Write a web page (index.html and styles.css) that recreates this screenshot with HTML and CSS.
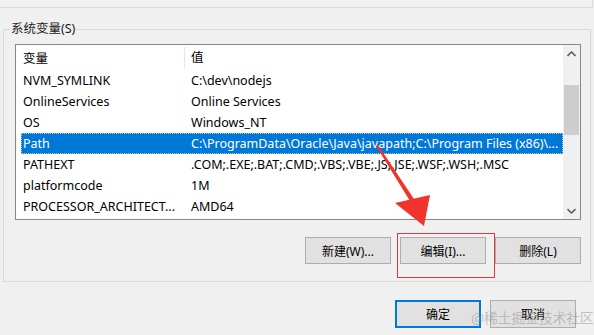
FILE: index.html
```html
<!DOCTYPE html>
<html lang="zh-CN">
<head>
    <meta charset="UTF-8">
    <meta name="viewport" content="width=device-width, initial-scale=1.0">
    <title>环境变量</title>
    <link rel="stylesheet" href="styles.css">
</head>
<body>

    <!-- bottom edge of the user variables group -->
    <div class="prev-group"></div>

    <fieldset class="group">
        <legend>系统变量(S)</legend>

        <div class="list">
            <div class="list-body">
                <div class="row head">
                    <span class="c1">变量</span>
                    <span class="c2">值</span>
                </div>
                <div class="row"><span class="c1">NVM_SYMLINK</span><span class="c2">C:\dev\nodejs</span></div>
                <div class="row"><span class="c1">OnlineServices</span><span class="c2">Online Services</span></div>
                <div class="row"><span class="c1">OS</span><span class="c2">Windows_NT</span></div>
                <div class="row selected"><span class="c1">Path</span><span class="c2">C:\ProgramData\Oracle\Java\javapath;C:\Program Files (x86)\...</span></div>
                <div class="row"><span class="c1">PATHEXT</span><span class="c2">.COM;.EXE;.BAT;.CMD;.VBS;.VBE;.JS;.JSE;.WSF;.WSH;.MSC</span></div>
                <div class="row"><span class="c1">platformcode</span><span class="c2">1M</span></div>
                <div class="row"><span class="c1">PROCESSOR_ARCHITECT...</span><span class="c2">AMD64</span></div>
            </div>
            <div class="scrollbar">
                <div class="sb-btn">
                    <svg width="9" height="6" viewBox="0 0 9 6"><path d="M0.5 5 L4.5 1 L8.5 5" fill="none" stroke="#606060" stroke-width="1.6"/></svg>
                </div>
                <div class="sb-track">
                    <div class="sb-thumb"></div>
                </div>
                <div class="sb-btn">
                    <svg width="9" height="6" viewBox="0 0 9 6"><path d="M0.5 1 L4.5 5 L8.5 1" fill="none" stroke="#606060" stroke-width="1.6"/></svg>
                </div>
            </div>
        </div>

        <div class="group-buttons">
            <button class="btn">新建(W)...</button>
            <button class="btn">编辑(I)...</button>
            <button class="btn">删除(L)</button>
        </div>
    </fieldset>

    <div class="dialog-buttons">
        <button class="btn default">确定</button>
        <button class="btn">取消</button>
    </div>

    <!-- annotation: red box and arrow pointing at the edit button -->
    <div class="mark-box"></div>
    <svg class="mark-arrow" width="594" height="335" viewBox="0 0 594 335">
        <polygon points="376,146 378,145 414,199 410,201" fill="#f0342c"/>
        <polygon points="395,203 430,195 424,226" fill="#f0342c"/>
    </svg>

    <div class="watermark">@稀土掘金技术社区</div>

</body>
</html>
```

FILE: styles.css
```css
* {
    margin: 0;
    padding: 0;
    box-sizing: border-box;
}

body {
    width: 594px;
    height: 335px;
    background-color: #f0f0f0;
    font-family: "Noto Sans", "Noto Sans CJK SC", sans-serif;
    font-size: 12px;
    color: #000;
    position: relative;
    overflow: hidden;
}

.prev-group {
    width: 593px;
    height: 8px;
    border-right: 1px solid #dadada;
    border-bottom: 1px solid #dadada;
}

/* System variables group box */
.group {
    margin: 13px 3px 0 3px;
    padding: 7px 9px 17px 6px;
    border: 1px solid #d9d9d9;
}

.group legend {
    padding: 0 1px;
    font-size: 12.5px;
    line-height: 16px;
    color: #1a1a1a;
}

.list {
    margin-left: 5px;
    height: 176px;
    border: 1px solid #828790;
    background-color: #fff;
    display: flex;
}

.list-body {
    flex: 1;
    padding-left: 5px;
    font-size: 12.5px;
}

.row {
    display: flex;
    height: 21px;
    align-items: center;
    white-space: nowrap;
}

.row.head {
    height: 25px;
}

.row .c1 {
    width: 163px;
    padding-left: 2px;
}

.row .c2 {
    padding-left: 7px;
}

.row.head .c2 {
    border-left: 1px solid #e5e5e5;
    height: 22px;
    line-height: 22px;
    padding-left: 6px;
}

.row.selected {
    background-color: #0078d7;
    color: #fff;
    outline: 1px dotted #9fc9ee;
    outline-offset: -1px;
}

.scrollbar {
    width: 17px;
    background-color: #f0f0f0;
    display: flex;
    flex-direction: column;
}

.sb-btn {
    height: 17px;
    display: flex;
    align-items: center;
    justify-content: center;
}

.sb-track {
    flex: 1;
    padding-top: 23px;
}

.sb-thumb {
    height: 50px;
    margin: 0 1px;
    background-color: #cdcdcd;
}

.btn {
    width: 86px;
    height: 27px;
    background-color: #e1e1e1;
    border: 1px solid #adadad;
    font-family: "Noto Sans", "Noto Sans CJK SC", sans-serif;
    font-size: 12px;
    color: #000;
}

.group-buttons {
    margin-top: 17px;
    display: flex;
    justify-content: flex-end;
    gap: 9px;
}

.dialog-buttons {
    margin: 18px 18px 0 0;
    display: flex;
    justify-content: flex-end;
    gap: 9px;
}

.dialog-buttons .btn {
    height: 28px;
}

.btn.default {
    border: 2px solid #0078d7;
}

.mark-box {
    position: absolute;
    left: 397px;
    top: 233px;
    width: 98px;
    height: 45px;
    border: 1px solid #e0393e;
}

.mark-arrow {
    position: absolute;
    left: 0;
    top: 0;
}

.watermark {
    position: absolute;
    left: 471px;
    top: 307px;
    font-family: "Noto Sans CJK SC", sans-serif;
    font-size: 14px;
    line-height: 20px;
    color: rgba(150, 150, 150, 0.55);
    letter-spacing: -0.3px;
}
```
